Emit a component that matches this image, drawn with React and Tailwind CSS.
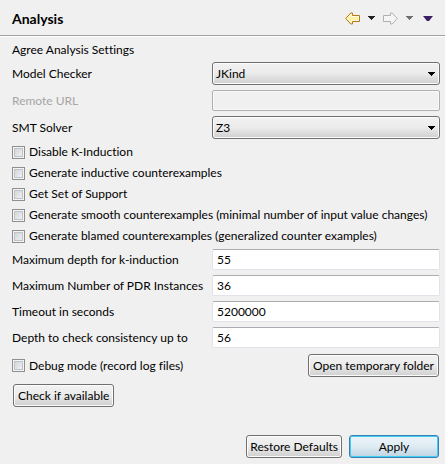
import { useState } from "react";

const FIELD =
  "h-[21px] w-full rounded-[2px] border border-[#e2e3ea] border-t-[#abadb3] bg-white px-1 text-black outline-none";
const BUTTON =
  "m-px h-[23px] rounded-[3px] border border-[#707070] bg-linear-to-b from-[#f2f2f2] from-0% via-[#ebebeb] via-50% to-[#cfcfcf] leading-5 shadow-[inset_0_0_0_1px_#fcfcfc] whitespace-nowrap";

function BackArrow() {
  return (
    <svg width="15" height="13" viewBox="0 0 15 13" aria-hidden="true">
      <path d="M0.7 6.5 5.8 1H7.5V3.5H14.5V9.5H7.5V12H5.8Z" fill="#fff0a8" stroke="#b87a14" strokeLinejoin="round" />
      <path d="M2.3 6.5 6.5 2.5V4.5H13.5V8.5H6.5V10.5Z" fill="none" stroke="#fffbe0" />
    </svg>
  );
}

function ForwardArrow() {
  return (
    <svg width="15" height="13" viewBox="0 0 15 13" aria-hidden="true">
      <path d="M14.3 6.5 9.2 1H7.5V3.5H0.5V9.5H7.5V12H9.2Z" fill="#f5f5f5" stroke="#b0b0b0" strokeLinejoin="round" />
    </svg>
  );
}

function Caret({ color }) {
  return (
    <svg width="7" height="4" viewBox="0 0 7 4" shapeRendering="crispEdges" aria-hidden="true">
      <path d="M0 0H7V1H6V2H5V3H4V4H3V3H2V2H1V1H0Z" fill={color} />
    </svg>
  );
}

function Combo({ id, label, options }) {
  return (
    <>
      <label htmlFor={id}>{label}</label>
      <div className="relative">
        <select
          id={id}
          className="block h-[23px] w-full appearance-none rounded-[3px] border border-[#707070] bg-linear-to-b from-[#f2f2f2] from-0% via-[#ebebeb] via-50% to-[#cfcfcf] px-[3px] text-black shadow-[inset_0_0_0_1px_#fcfcfc] outline-none"
        >
          {options.map((option) => (
            <option key={option}>{option}</option>
          ))}
        </select>
        <span className="pointer-events-none absolute inset-y-0 right-[5px] flex items-center">
          <Caret color="#000" />
        </span>
      </div>
    </>
  );
}

function Check({ label, className = "" }) {
  return (
    <label className={`flex h-4 items-center gap-1 whitespace-nowrap ${className}`}>
      <input
        type="checkbox"
        className="size-[13px] shrink-0 appearance-none border border-[#8e8f8f] bg-linear-to-br from-[#cbcfd5] to-[#f6f6f6] shadow-[inset_0_0_0_1px_#f4f4f4,inset_0_0_0_2px_#bfc3c9] checked:from-[#4b5f9e] checked:to-[#4b5f9e]"
      />
      {label}
    </label>
  );
}

function Field({ id, label, initial }) {
  const [value, setValue] = useState(initial);
  return (
    <>
      <label htmlFor={id}>{label}</label>
      <input id={id} type="text" className={FIELD} value={value} onChange={(e) => setValue(e.target.value)} />
    </>
  );
}

export default function App() {
  return (
    <main className="flex min-h-screen flex-col bg-[#f0f0f0] font-['Lato','Noto_Sans',sans-serif] text-[12px] leading-4 text-black [font-variant-ligatures:none]">
      <header className="flex h-[37px] items-center justify-between border-b border-white pr-3 pl-3 shadow-[inset_0_-1px_0_#a0a0a0]">
        <h1 className="pt-0.5 text-[14px] leading-4 font-bold">Analysis</h1>
        <nav className="flex items-center" aria-label="History">
          <button type="button" aria-label="Back">
            <BackArrow />
          </button>
          <button type="button" aria-label="Back history" className="ml-2">
            <Caret color="#222" />
          </button>
          <button type="button" aria-label="Forward" disabled className="ml-2">
            <ForwardArrow />
          </button>
          <button type="button" aria-label="Forward history" disabled className="ml-2">
            <Caret color="#707070" />
          </button>
          <button type="button" aria-label="Menu" className="ml-[10px]">
            <svg width="10" height="5" viewBox="0 0 10 5" aria-hidden="true">
              <path d="M0 0H10L6 5H4Z" fill="#3a1f66" />
            </svg>
          </button>
        </nav>
      </header>

      <form className="flex grow flex-col" onSubmit={(e) => e.preventDefault()}>
        <div className="grid grid-cols-[195px_minmax(0,1fr)] items-center gap-[5px] pt-[5px] pr-[5px] pl-3">
          <h2 className="col-span-2 leading-[15px]">Agree Analysis Settings</h2>
          <Combo id="checker" label="Model Checker" options={["JKind"]} />
          <label htmlFor="remote" className="text-[#a5a5a5]">
            Remote URL
          </label>
          <input
            id="remote"
            type="text"
            disabled
            className="h-[21px] w-full rounded-[2px] border border-[#afafaf] bg-[#f0f0f0] px-1 shadow-[inset_0_0_0_1px_#fafafa]"
          />
          <Combo id="solver" label="SMT Solver" options={["Z3"]} />
          <Check className="col-span-2" label="Disable K-Induction" />
          <Check className="col-span-2" label="Generate inductive counterexamples" />
          <Check className="col-span-2" label="Get Set of Support" />
          <Check className="col-span-2" label="Generate smooth counterexamples (minimal number of input value changes)" />
          <Check className="col-span-2" label="Generate blamed counterexamples (generalized counter examples)" />
          <Field id="depth" label="Maximum depth for k-induction" initial="55" />
          <Field id="pdr" label="Maximum Number of PDR Instances" initial="36" />
          <Field id="timeout" label="Timeout in seconds" initial="5200000" />
          <Field id="consistency" label="Depth to check consistency up to" initial="56" />
          <Check label="Debug mode (record log files)" />
          <button type="button" className={`${BUTTON} justify-self-end px-1`}>
            Open temporary folder
          </button>
          <button type="button" className={`${BUTTON} justify-self-start px-1`}>
            Check if available
          </button>
        </div>

        <footer className="mt-auto flex justify-end gap-[5px] pt-5 pr-[5px] pb-[5px]">
          <button type="button" className={`${BUTTON} px-[3px]`}>
            Restore Defaults
          </button>
          <button
            type="submit"
            className="m-px h-[23px] w-[90px] rounded-[3px] border border-[#3c7fb1] bg-linear-to-b from-[#ecf4f9] from-0% via-[#dfebf3] via-50% to-[#bdd3e1] leading-5 shadow-[inset_0_0_0_1px_#3fcdf5]"
          >
            Apply
          </button>
        </footer>
      </form>
    </main>
  );
}
